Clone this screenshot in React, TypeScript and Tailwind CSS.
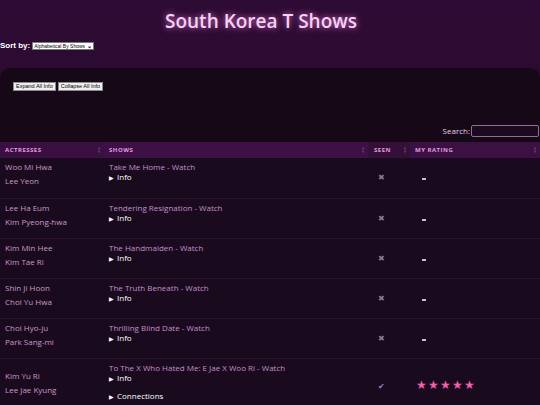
import React from "react"

interface Show {
  actresses: string[]
  title: string
  seen: boolean
  rating: number
  connections?: boolean
}

const shows: Show[] = [
  { actresses: ["Woo Mi Hwa", "Lee Yeon"], title: "Take Me Home", seen: false, rating: 0 },
  { actresses: ["Lee Ha Eum", "Kim Pyeong-hwa"], title: "Tendering Resignation", seen: false, rating: 0 },
  { actresses: ["Kim Min Hee", "Kim Tae Ri"], title: "The Handmaiden", seen: false, rating: 0 },
  { actresses: ["Shin Ji Hoon", "Choi Yu Hwa"], title: "The Truth Beneath", seen: false, rating: 0 },
  { actresses: ["Choi Hyo-ju", "Park Sang-mi"], title: "Thrilling Blind Date", seen: false, rating: 0 },
  {
    actresses: ["Kim Yu Ri", "Lee Jae Kyung"],
    title: "To The X Who Hated Me: E Jae X Woo Ri",
    seen: true,
    rating: 5,
    connections: true,
  },
]

// faint sort handle at the right of each header cell
const SortArrows = () => (
  <span className="absolute right-[4px] top-1/2 -translate-y-1/2 flex flex-col gap-[1px] opacity-25">
    <span className="block w-[2px] h-[2px] bg-[#c9a6c9]"></span>
    <span className="block w-[2px] h-[2px] bg-[#c9a6c9]"></span>
  </span>
)

export default function App() {
  return (
    <div
      className="w-[540px] h-[405px] overflow-hidden bg-gradient-to-b from-[#2e0b34] to-[#220a27] text-white"
      style={{ fontFamily: "'Open Sans', 'Liberation Sans', sans-serif" }}
    >
      <h1 className="text-center text-[19px] font-semibold text-[#f3d3f0] pt-[9px] pr-[18px] leading-[24px] [text-shadow:0_0_6px_#e36fd3]">
        South Korea T Shows
      </h1>

      <div
        className="flex items-center mt-[7px] h-[12px] text-[8px] font-bold text-white"
        style={{ fontFamily: "'Liberation Sans', Arial, sans-serif" }}
      >
        <span>Sort by:</span>
        <span className="ml-[2px] flex items-center h-[8px] px-[1px] bg-white border border-[#777] text-black text-[5px] font-normal leading-none">
          Alphabetical By Shows
          <span className="ml-[2px] text-[6px] font-bold">⌄</span>
        </span>
      </div>

      <div className="mt-[16px] rounded-t-[10px] bg-[#170818] h-[500px]">
        <div
          className="flex gap-[2px] pt-[14px] pl-[13px]"
          style={{ fontFamily: "'Liberation Sans', Arial, sans-serif" }}
        >
          <button className="h-[9px] px-[2px] bg-[#efefef] border border-[#8a8a8a] text-black text-[5.5px] leading-none">
            Expand All Info
          </button>
          <button className="h-[9px] px-[2px] bg-[#efefef] border border-[#8a8a8a] text-black text-[5.5px] leading-none">
            Collapse All Info
          </button>
        </div>

        <div className="flex justify-end items-center mt-[34px] pr-[1px] text-[8px] text-[#e6d4e6]">
          <span>Search:</span>
          <span className="ml-[1px] w-[68px] h-[12px] border border-[#8e6f90] rounded-[2px] bg-[#1d0a20]"></span>
        </div>

        <table className="w-full mt-[5px] border-collapse table-fixed">
          <thead>
            <tr className="h-[16px] text-[6px] font-bold tracking-[0.5px] text-[#e79ae0]">
              <th className="relative w-[104px] text-left pl-[5px] bg-[#3a0f41]">
                ACTRESSES
                <SortArrows />
              </th>
              <th className="relative w-[264px] text-left pl-[5px] bg-[#3d1146]">
                SHOWS
                <SortArrows />
              </th>
              <th className="relative w-[42px] text-left pl-[6px] bg-[#341039]">
                SEEN
                <SortArrows />
              </th>
              <th className="relative text-left pl-[5px] bg-[#3b1043]">
                MY RATING
                <SortArrows />
              </th>
            </tr>
          </thead>
          <tbody>
            {shows.map((show) => (
              <tr
                key={show.title}
                className={`border-b border-[#2c1430] ${show.connections ? "h-[50px]" : "h-[40px]"} bg-[#1a0a1d]`}
              >
                <td className={`pl-[5px] align-top ${show.connections ? "pt-[10px]" : "pt-[2px]"}`}>
                  {show.actresses.map((name) => (
                    <div key={name} className="text-[8px] leading-[14px] text-[#c99ac6]">
                      {name}
                    </div>
                  ))}
                </td>
                <td className="pl-[5px] pt-[4px] align-top">
                  <div className="text-[8px] leading-[10px] text-[#c58fd0]">{show.title} - Watch</div>
                  <div className="text-[8px] leading-[10px] text-white">
                    <span className="text-[6px] mr-[3px]">▶</span>Info
                  </div>
                  {show.connections && (
                    <div className="mt-[7px] text-[8px] leading-[10px] text-white">
                      <span className="text-[6px] mr-[3px]">▶</span>Connections
                    </div>
                  )}
                </td>
                <td className={`pl-[10px] align-top ${show.connections ? "pt-[22px]" : "pt-[14px]"}`}>
                  {show.seen ? (
                    <span className="block text-[8px] leading-[10px] text-[#9a7ad0]">✔</span>
                  ) : (
                    <span className="block text-[8px] leading-[10px] text-[#8a7a8c]">✖</span>
                  )}
                </td>
                <td className="pl-[6px] pt-[20px] align-top">
                  {show.rating > 0 ? (
                    <div className="flex gap-[1px] text-[12px] leading-none text-[#f25fae]">
                      {Array.from({ length: show.rating }).map((_, i) => (
                        <span key={i}>★</span>
                      ))}
                    </div>
                  ) : (
                    <span className="block ml-[6px] w-[4px] h-[2px] bg-[#d9b3d6]"></span>
                  )}
                </td>
              </tr>
            ))}
          </tbody>
        </table>
      </div>
    </div>
  )
}
